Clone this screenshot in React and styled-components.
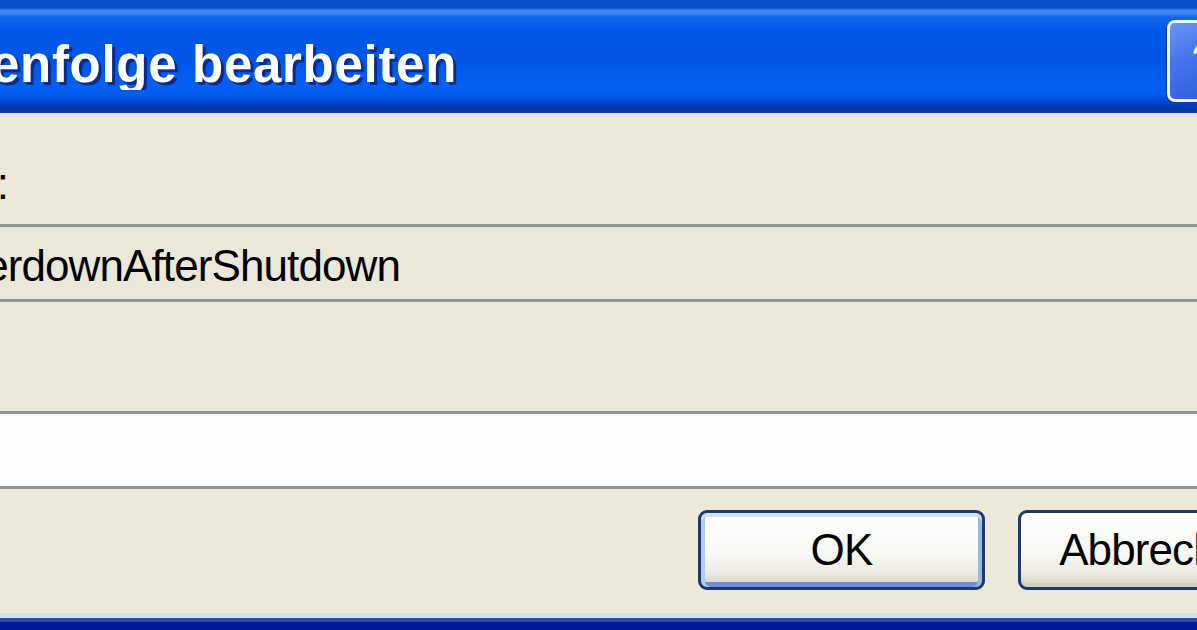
import React from 'react'
import styled, { createGlobalStyle } from 'styled-components'

const Global = createGlobalStyle`
  html, body {
    margin: 0;
    padding: 0;
    background: #ece9d8;
    overflow: hidden;
  }
`

const Window = styled.div`
  width: 1345px;
  height: 630px;
  display: flex;
  flex-direction: column;
  background: #ece9d8;
  font-family: "Liberation Sans", Arial, sans-serif;
`

const TitleBar = styled.div`
  height: 113px;
  flex-shrink: 0;
  display: flex;
  align-items: flex-start;
  background: linear-gradient(180deg,
    #0a4cc9 0px, #0a4fd0 8px, #3a86f2 10px, #3d8cf6 13px, #1366f0 17px,
    #0058ea 30px, #0056e4 60px, #0260f2 85px, #005cf0 95px,
    #0048d2 102px, #0036a8 108px, #153a92 113px);
`

const Clip = styled.div`
  width: ${p => p.$w}px;
  flex-shrink: 0;
  overflow: hidden;
  display: flex;
  justify-content: flex-end;
  white-space: nowrap;
`

const TitleText = styled(Clip)`
  margin-top: 39px;
  padding-right: 4px;
  font-weight: bold;
  font-size: 51px;
  line-height: 51px;
  letter-spacing: 0.7px;
  color: #ffffff;
  text-shadow: 3px 3px 0 #0b2a8a;
`

const Spacer = styled.div`
  flex: 1;
`

const HelpButton = styled.div`
  width: 80px;
  height: 82px;
  margin-top: 20px;
  margin-right: 98px;
  box-sizing: border-box;
  border: 3px solid #eef4ff;
  border-radius: 8px;
  background: linear-gradient(160deg, #6a95f6 0%, #4474ec 40%, #2c58dc 100%);
  box-shadow: -1px 1px 0 #0a3aa8;
  display: flex;
  align-items: center;
  justify-content: center;
  color: #ffffff;
  font-weight: bold;
  font-size: 52px;
  line-height: 1;
`

const Body = styled.div`
  flex: 1;
  display: flex;
  flex-direction: column;
  border-top: 4px solid #d9e3f2;
  padding-right: 40px;
  font-size: 44px;
  letter-spacing: -0.9px;
  color: #000000;
`

const Label = styled(Clip)`
  margin-top: 45px;
  line-height: 44px;
  height: 44px;
`

const Field = styled.div`
  height: 67px;
  padding-top: 5px;
  border-top: 3px solid #8e9593;
  border-bottom: 3px solid #8e9593;
  background: ${p => (p.$readOnly ? '#ebe8d9' : '#fdfefe')};
  box-shadow: inset 0 2px 0 ${p => (p.$readOnly ? '#e4e5dd' : '#f3f8f8')};
  display: flex;
  align-items: center;
  margin-top: ${p => p.$top}px;
`

const FieldText = styled(Clip)`
  line-height: 44px;
`

const Buttons = styled.div`
  display: flex;
  justify-content: flex-end;
  gap: 33px;
  margin-top: 21px;
`

const Button = styled.div`
  width: 287px;
  height: 80px;
  box-sizing: border-box;
  border: 3px solid #1d3a6b;
  border-radius: 9px;
  display: flex;
  align-items: center;
  justify-content: center;
  line-height: 44px;
  background: linear-gradient(180deg, #ffffff 0%, #f7f7f4 55%, #ecebe4 80%, #d8d2c0 100%);
  box-shadow: ${p => p.$default
    ? 'inset 0 4px 0 #cfe2fb, inset 4px 0 0 #b2cbf2, inset -4px 0 0 #9ab7ea, inset 0 -5px 0 #6f8fd8'
    : 'inset 0 -4px 0 #d6cfbc, inset -2px 0 0 #e2ded0'};
`

const FrameBottom = styled.div`
  height: 17px;
  flex-shrink: 0;
  background: linear-gradient(180deg, #d6e0f4 0px, #d6e0f4 5px, #2a4ab2 5px, #2a4ab2 9px, #00199a 9px, #00199a 17px);
`

export default function App() {
  return (
    <>
      <Global />
      <Window>
        <TitleBar>
          <TitleText $w={457}>
            <span>Zeichenfolge bearbeiten</span>
          </TitleText>
          <Spacer />
          <HelpButton>?</HelpButton>
        </TitleBar>
        <Body>
          <Label $w={8}>
            <span>Wertname:</span>
          </Label>
          <Field $readOnly $top={18}>
            <FieldText $w={400}>
              <span>PowerdownAfterShutdown</span>
            </FieldText>
          </Field>
          <Field $top={109} />
          <Buttons>
            <Button $default>OK</Button>
            <Button>Abbrechen</Button>
          </Buttons>
        </Body>
        <FrameBottom />
      </Window>
    </>
  )
}
